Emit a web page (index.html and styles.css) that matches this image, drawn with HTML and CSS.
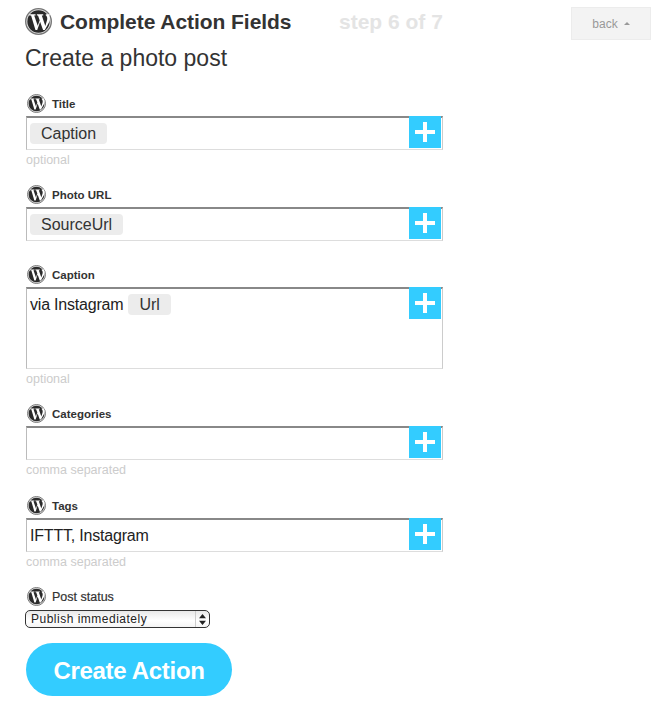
FILE: index.html
```html
<!DOCTYPE html>
<html lang="en">
<head>
<meta charset="utf-8">
<title>Complete Action Fields</title>
<link rel="stylesheet" href="styles.css">
</head>
<body>
<svg class="defs" width="0" height="0" aria-hidden="true">
  <symbol id="wp" viewBox="0 0 32 32">
    <circle cx="16" cy="16" r="15.2" fill="#ddd" stroke="#777" stroke-width="1.600"/>
    <circle cx="16" cy="16" r="13.200" fill="#2a2a2a"/>
    <path fill="#fff" d="M5 7.500h7.500v1.300h-1.600l4.200 12.300 2.300-6.600-2-5.700h-1.300V7.500h7.500v1.300h-1.700l4.200 12.400 2-6.600c.7-2.300.2-4.200-1.100-5.800h-.4V7.500h4.800v1.300h-.9c1.300 2.200 1.400 4.600.5 7.300L23.500 26h-2.100l-3.500-9.800L14.500 26h-2.100L7.200 8.800H5z"/>
  </symbol>
</svg>
<main class="page">
  <header class="head">
    <svg class="logo"><use href="#wp"/></svg>
    <h1 class="title">Complete Action Fields</h1>
    <span class="step">step 6 of 7</span>
    <a class="back">back <span class="caret"></span></a>
  </header>
  <h2 class="sub">Create a photo post</h2>

  <section class="field field-first">
    <div class="label"><svg class="ico"><use href="#wp"/></svg>Title</div>
    <div class="box"><span class="chip">Caption</span><span class="plus"></span></div>
    <div class="hint">optional</div>
  </section>

  <section class="field field-url">
    <div class="label"><svg class="ico"><use href="#wp"/></svg>Photo URL</div>
    <div class="box"><span class="chip">SourceUrl</span><span class="plus"></span></div>
  </section>

  <section class="field field-caption">
    <div class="label"><svg class="ico"><use href="#wp"/></svg>Caption</div>
    <div class="box box-tall"><span class="plain">via Instagram</span><span class="chip chip-inline">Url</span><span class="plus"></span></div>
    <div class="hint">optional</div>
  </section>

  <section class="field field-cat">
    <div class="label"><svg class="ico"><use href="#wp"/></svg>Categories</div>
    <div class="box"><span class="plus"></span></div>
    <div class="hint">comma separated</div>
  </section>

  <section class="field field-tags">
    <div class="label"><svg class="ico"><use href="#wp"/></svg>Tags</div>
    <div class="box"><span class="plain">IFTTT, Instagram</span><span class="plus"></span></div>
    <div class="hint">comma separated</div>
  </section>

  <section class="field field-status">
    <div class="label"><svg class="ico"><use href="#wp"/></svg>Post status</div>
    <div class="select">Publish immediately<span class="arrows"><svg width="7" height="11" viewBox="0 0 7 11"><path fill="#222" d="M3.500 0 7 4.300H0zM3.500 11 0 6.700h7z"/></svg></span></div>
  </section>

  <a class="create">Create Action</a>
</main>
</body>
</html>
```

FILE: styles.css
```css
* { box-sizing: border-box; }
html, body { margin: 0; background: #fff; }
body { font-family: "Liberation Sans", Arial, sans-serif; color: #333; }
.defs { position: absolute; }
.page { width: 670px; height: 716px; padding: 7px 19px 0 25px; overflow: hidden; }

.head { display: flex; align-items: flex-start; height: 32px; }
.logo { width: 27px; height: 27px; flex: none; margin-top: 1px; }
.title { margin: 2px 0 0 8px; font-size: 21px; line-height: 26px; font-weight: 700; color: #333; width: 279px; flex: none; white-space: nowrap; letter-spacing: -.05px; }
.step { margin-top: 2px; font-size: 21px; line-height: 26px; font-weight: 700; color: #e4e4e4; white-space: nowrap; }
.back { margin-left: auto; width: 80px; height: 33px; background: #f3f3f3; border: 1px solid #ececec; color: #999; font-size: 12px; display: flex; align-items: center; justify-content: center; gap: 6px; }
.caret { width: 0; height: 0; border: 3px solid transparent; border-bottom-color: #999; border-top-width: 0; }

.sub { margin: 5px 0 0; font-size: 23px; line-height: 28px; font-weight: 400; color: #333; }

.field { width: 417px; margin-left: 1px; }
.field-first { margin-top: 22px; }
.field-url { margin-top: 15px; }
.field-caption { margin-top: 24px; }
.field-cat { margin-top: 15px; }
.field-tags { margin-top: 16px; }
.field-status { margin-top: 15px; }

.label { display: flex; align-items: center; height: 19px; margin-bottom: 3px; font-size: 11.500px; font-weight: 700; color: #333; }
.ico { width: 19px; height: 19px; margin-left: 1px; margin-right: 6px; flex: none; }

.box { position: relative; height: 34px; border: 1px solid #ddd; border-left: 1px solid #bbb; border-right-color: #ccc; border-top: 2px solid #888; padding: 3px 36px 0 3px; font-size: 16px; line-height: 25px; color: #222; display: flex; align-items: flex-start; background: #fff; }
.box-tall { height: 82px; }
.plain { letter-spacing: -.2px; }
.chip { display: inline-block; height: 21px; margin-top: 2px; padding: 0 11px; line-height: 21px; background: #ececec; border-radius: 4px; color: #333; font-size: 16px; }
.chip-inline { margin-left: 5px; }
.plus { position: absolute; top: -2px; right: 1px; width: 32px; height: 32px; background: #33ccff; }
.plus::before, .plus::after { content: ""; position: absolute; background: #fff; }
.plus::before { left: 6px; right: 6px; top: 14px; height: 4px; }
.plus::after { top: 6px; bottom: 6px; left: 14px; width: 4px; }

.hint { height: 20px; font-size: 12.500px; line-height: 20px; color: #ccc; }

.field-status .label { margin-bottom: 4px; font-size: 12.500px; font-weight: 400; -webkit-text-stroke: .2px #333; }
.select { position: relative; margin-left: -1px; width: 185px; height: 18px; border: 1.500px solid #333; border-radius: 5px; padding-left: 5px; font-size: 12px; line-height: 16px; letter-spacing: .5px; color: #222; background: linear-gradient(#e8e8e8, #fff 60%, #f4f4f4); }
.arrows { position: absolute; right: 0; top: 0; bottom: 0; width: 14px; border-left: 1px solid #ccc; display: flex; align-items: center; justify-content: center; }

.create { display: flex; align-items: center; justify-content: center; margin: 15px 0 0 1px; padding-top: 2px; width: 206px; height: 53px; border-radius: 27px; background: #33ccff; color: #fff; font-size: 24px; font-weight: 700; letter-spacing: -.3px; }
```
